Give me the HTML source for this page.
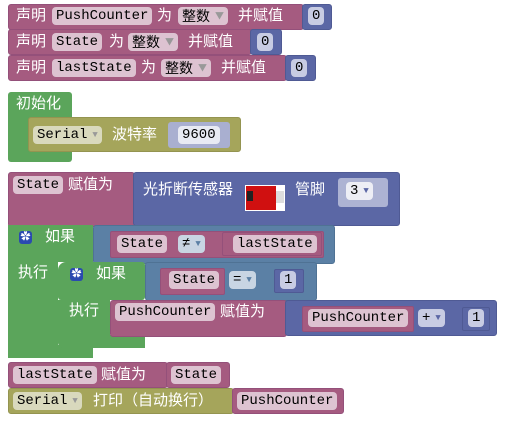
<!DOCTYPE html>
<html><head><meta charset="utf-8"><style>
body{margin:0;width:508px;height:421px;background:#fff;position:relative;overflow:hidden;font-family:"Liberation Sans","Noto Sans CJK SC",sans-serif}
.b{position:absolute;border-radius:3px}
.m{background:#A55B80;border:1px solid #94507a}
.v{background:#5B67A5;border:1px solid #4f5a94}
.g{background:#5BA55B}
.o{background:#A5A55B;border:1px solid #949450}
.l{background:#5B80A5;border:1px solid #4f7294}
.t{position:absolute;color:#fff;font-family:"Noto Sans CJK SC",sans-serif;font-size:15px;line-height:18px;margin-top:-2px;white-space:nowrap}
.p{position:absolute;font-family:"Liberation Mono",monospace;font-size:14px;line-height:18px;height:18px;margin-top:-1px;padding:0 4px;border-radius:4px;color:#000;white-space:nowrap}
.pm{background:#DDC3D1}
.pv{background:#C8CCE3}
.po{background:#D9D9BD}
.pl{background:#C8D5E3}
.ar{color:#999;font-size:9px;margin-left:5px;vertical-align:top}
.gear{position:absolute;width:13px;height:13px;background:#2a4ab0;border-radius:3px;color:#fff;font-size:10px;line-height:13px;text-align:center}
</style></head><body>
<div class="b m" style="left:8px;top:4px;width:294px;height:24px"></div>
<div class="b v" style="left:302px;top:4px;width:28px;height:24px"></div>
<div class="t" style="left:16px;top:8px">声明</div>
<div class="p pm" style="left:52px;top:8px">PushCounter</div>
<div class="t" style="left:157px;top:8px">为</div>
<div class="p pm" style="left:178px;top:8px;font-family:'Noto Sans CJK SC',sans-serif">整数<span class="ar">▼</span></div>
<div class="t" style="left:238px;top:8px">并赋值</div>
<div class="p pv" style="left:308px;top:8px">0</div>

<div class="b m" style="left:8px;top:29px;width:242px;height:24px"></div>
<div class="b v" style="left:250px;top:29px;width:30px;height:24px"></div>
<div class="t" style="left:16px;top:34px">声明</div>
<div class="p pm" style="left:52px;top:34px">State</div>
<div class="t" style="left:109px;top:34px">为</div>
<div class="p pm" style="left:128px;top:34px;font-family:'Noto Sans CJK SC',sans-serif">整数<span class="ar">▼</span></div>
<div class="t" style="left:188px;top:34px">并赋值</div>
<div class="p pv" style="left:257px;top:34px">0</div>

<div class="b m" style="left:8px;top:55px;width:277px;height:24px"></div>
<div class="b v" style="left:285px;top:55px;width:29px;height:24px"></div>
<div class="t" style="left:16px;top:60px">声明</div>
<div class="p pm" style="left:52px;top:60px">lastState</div>
<div class="t" style="left:141px;top:60px">为</div>
<div class="p pm" style="left:161px;top:60px;font-family:'Noto Sans CJK SC',sans-serif">整数<span class="ar">▼</span></div>
<div class="t" style="left:221px;top:60px">并赋值</div>
<div class="p pv" style="left:291px;top:60px">0</div>

<div class="b g" style="left:8px;top:92px;width:64px;height:70px"></div>
<div class="t" style="left:16px;top:96px">初始化</div>
<div class="b o" style="left:28px;top:117px;width:211px;height:33px"></div>
<div class="p po" style="left:33px;top:127px">Serial<span class="ar">▼</span></div>
<div class="t" style="left:112px;top:127px">波特率</div>
<div class="b" style="left:168px;top:122px;width:62px;height:26px;background:#A9AFD0"></div>
<div class="p pv" style="left:178px;top:127px;background:#E8EAF3">9600</div>

<div class="b m" style="left:8px;top:172px;width:125px;height:53px"></div>
<div class="b v" style="left:133px;top:172px;width:265px;height:52px"></div>
<div class="p pm" style="left:13px;top:177px">State</div>
<div class="t" style="left:68px;top:177px">赋值为</div>
<div class="t" style="left:143px;top:182px">光折断传感器</div>
<div class="b" style="left:245px;top:185px;width:40px;height:26px;background:#fff;border-radius:0"></div>
<div class="b" style="left:246px;top:186px;width:30px;height:24px;background:#d01010;border-radius:0"></div>
<div class="b" style="left:247px;top:191px;width:6px;height:10px;background:#222;border-radius:0"></div>
<div class="b" style="left:276px;top:191px;width:8px;height:12px;background:#ddd;border-radius:0"></div>
<div class="t" style="left:295px;top:182px">管脚</div>
<div class="b" style="left:338px;top:178px;width:50px;height:29px;background:#ADB3D3"></div>
<div class="p" style="left:346px;top:183px;background:#EDEEF5">3<span class="ar" style="color:#5B67A5">▼</span></div>

<div class="b g" style="left:8px;top:225px;width:85px;height:37px;border-radius:0"></div>
<div class="b g" style="left:8px;top:262px;width:50px;height:96px;border-radius:0"></div>
<div class="b g" style="left:8px;top:345px;width:85px;height:13px;border-radius:0"></div>
<div class="gear" style="left:19px;top:231px">✿</div>
<div class="t" style="left:45px;top:229px">如果</div>
<div class="t" style="left:18px;top:265px">执行</div>
<div class="b l" style="left:93px;top:225px;width:240px;height:37px"></div>
<div class="b m" style="left:110px;top:231px;width:212px;height:25px;border-radius:2px"></div>
<div class="p pm" style="left:117px;top:236px">State</div>
<div class="p pl" style="left:178px;top:236px">≠<span class="ar" style="color:#5B80A5">▼</span></div>
<div class="b m" style="left:222px;top:232px;width:98px;height:22px;border-radius:2px"></div>
<div class="p pm" style="left:233px;top:236px">lastState</div>

<div class="b g" style="left:58px;top:262px;width:87px;height:38px;border-top-left-radius:8px"></div>
<div class="b g" style="left:58px;top:300px;width:52px;height:48px;border-radius:0 0 0 6px"></div>
<div class="b g" style="left:58px;top:335px;width:87px;height:13px;border-radius:0 0 0 6px"></div>
<div class="gear" style="left:70px;top:268px">✿</div>
<div class="t" style="left:96px;top:266px">如果</div>
<div class="t" style="left:69px;top:303px">执行</div>
<div class="b l" style="left:145px;top:262px;width:170px;height:37px"></div>
<div class="b m" style="left:160px;top:268px;width:63px;height:25px;border-radius:2px"></div>
<div class="p pm" style="left:169px;top:272px">State</div>
<div class="p pl" style="left:229px;top:272px">=<span class="ar" style="color:#5B80A5">▼</span></div>
<div class="b v" style="left:274px;top:269px;width:28px;height:22px;border-radius:2px"></div>
<div class="p pv" style="left:280px;top:272px">1</div>

<div class="b m" style="left:110px;top:300px;width:175px;height:35px"></div>
<div class="b v" style="left:285px;top:300px;width:210px;height:34px"></div>
<div class="p pm" style="left:115px;top:304px">PushCounter</div>
<div class="t" style="left:220px;top:304px">赋值为</div>
<div class="b m" style="left:302px;top:306px;width:110px;height:24px;border-radius:2px"></div>
<div class="p pm" style="left:308px;top:310px">PushCounter</div>
<div class="p pv" style="left:418px;top:310px">+<span class="ar" style="color:#5B67A5">▼</span></div>
<div class="b v" style="left:462px;top:307px;width:26px;height:22px;border-radius:2px"></div>
<div class="p pv" style="left:468px;top:310px">1</div>

<div class="b m" style="left:8px;top:362px;width:158px;height:24px"></div>
<div class="b m" style="left:166px;top:362px;width:62px;height:24px"></div>
<div class="p pm" style="left:13px;top:367px">lastState</div>
<div class="t" style="left:101px;top:367px">赋值为</div>
<div class="p pm" style="left:171px;top:367px">State</div>

<div class="b o" style="left:8px;top:388px;width:224px;height:24px"></div>
<div class="b m" style="left:232px;top:388px;width:110px;height:24px"></div>
<div class="p po" style="left:13px;top:393px">Serial<span class="ar">▼</span></div>
<div class="t" style="left:93px;top:393px">打印（自动换行）</div>
<div class="p pm" style="left:237px;top:393px">PushCounter</div>
</body></html>
